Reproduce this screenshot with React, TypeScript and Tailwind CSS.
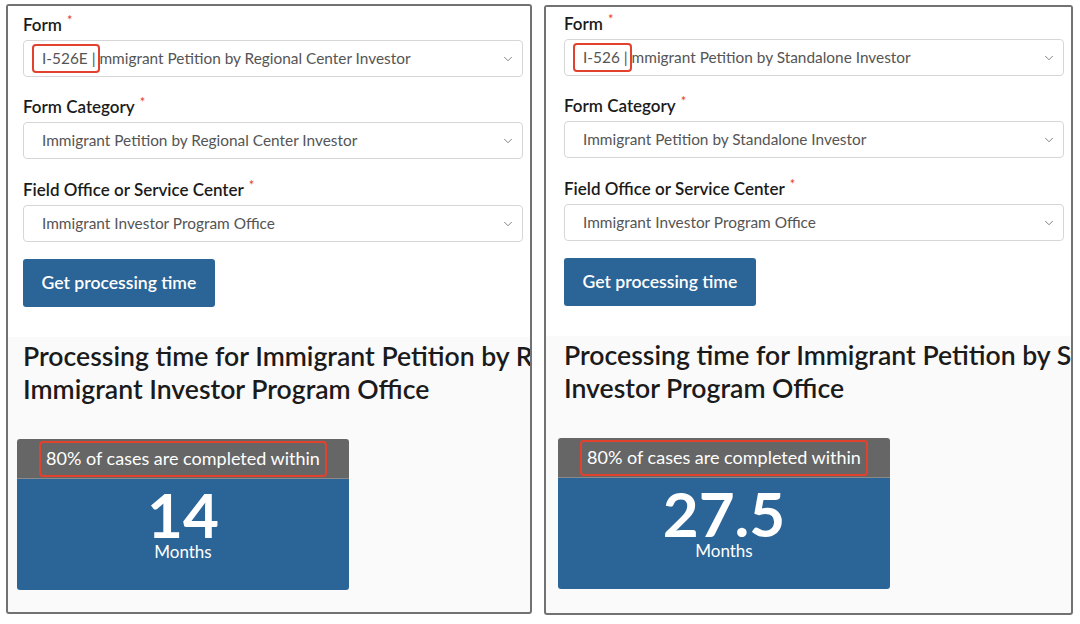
import { ChevronDown } from 'lucide-react';

type Panel = {
  code: string;
  name: string;
  office: string;
  line1: string;
  line2: string;
  months: string;
};

const PANELS: Panel[] = [
  {
    code: 'I-526E |',
    name: 'Immigrant Petition by Regional Center Investor',
    office: 'Immigrant Investor Program Office',
    line1: 'Processing time for Immigrant Petition by Regional Center Investor at',
    line2: 'Immigrant Investor Program Office',
    months: '14',
  },
  {
    code: 'I-526 |',
    name: 'Immigrant Petition by Standalone Investor',
    office: 'Immigrant Investor Program Office',
    line1: 'Processing time for Immigrant Petition by Standalone Investor at Immigrant',
    line2: 'Investor Program Office',
    months: '27.5',
  },
];

function Label({ text }: { text: string }) {
  return (
    <div className="flex h-[22px] items-center text-[17px] font-semibold text-[#1b1b1b]">
      {text}
      <span className="ml-[5px] -mt-[8px] text-[13px] font-normal text-[#e2412d]">*</span>
    </div>
  );
}

function Select({ children }: { children: React.ReactNode }) {
  return (
    <div className="mt-[4px] flex h-[37px] items-center justify-between rounded-[4px] border border-[#d6d6d6] bg-white pl-[18px] pr-[7px] text-[15.4px] text-[#555]">
      <div className="whitespace-nowrap">{children}</div>
      <ChevronDown size={14} strokeWidth={1.25} className="text-[#555]" />
    </div>
  );
}

function ProcessingPanel({
  p,
  className,
  pad,
}: {
  p: Panel;
  className: string;
  pad: string;
}) {
  return (
    <div
      className={`flex h-[610px] flex-col overflow-hidden rounded-[3px] border-2 border-[#727272] bg-[#fafafa] ${className}`}
    >
      {/* Form fields */}
      <section className={`bg-white pb-[30px] pr-[7px] ${pad}`}>
        <Label text="Form" />
        <Select>
          <span className="relative">
            {p.code}
            <span className="absolute -bottom-[6px] -left-[10px] -right-[4px] -top-[5px] rounded-[4px] border-2 border-[#e2412d]" />
          </span>{' '}
          {p.name.slice(1)}
        </Select>

        <div className="mt-[19px]">
          <Label text="Form Category" />
          <Select>{p.name}</Select>
        </div>

        <div className="mt-[20px]">
          <Label text="Field Office or Service Center" />
          <Select>{p.office}</Select>
        </div>

        <button className="mt-[17px] h-[48px] rounded-[3px] bg-[#2b6496] px-[18.5px] text-[17.6px] font-semibold text-white">
          Get processing time
        </button>
      </section>

      {/* Result */}
      <section className="pt-[3px]">
        <h2 className="whitespace-nowrap text-[26.6px] font-semibold leading-[33px] text-[#1b1b1b]">
          <span className="block pl-[var(--pl)]">{p.line1}</span>
          <span className="block pl-[var(--pl)]">{p.line2}</span>
        </h2>

        <div className="ml-[var(--cl)] mt-[33px] w-[332px] overflow-hidden rounded-[3px]">
          <div className="flex h-[40px] items-center justify-center border-b border-[#8a8a8a] bg-[#666]">
            <span className="relative text-[18px] text-white">
              80% of cases are completed within
              <span className="absolute -bottom-[5px] -left-[7px] -right-[7px] -top-[4px] rounded-[4px] border-2 border-[#e2412d]" />
            </span>
          </div>
          <div className="flex h-[111px] flex-col items-center bg-[#2b6496] text-white">
            <div className="mt-[8px] text-[62px] font-bold leading-[55px]">{p.months}</div>
            <div className="text-[17px] leading-[20px]">Months</div>
          </div>
        </div>
      </section>
    </div>
  );
}

export default function App() {
  return (
    <div className="flex h-[624px] w-[1080px] bg-white font-['Lato',sans-serif]">
      <ProcessingPanel
        p={PANELS[0]}
        pad="pl-[15px] pt-[8px]"
        className="ml-[6px] mt-[4px] w-[526px] [--cl:9px] [--pl:15px]"
      />
      <ProcessingPanel
        p={PANELS[1]}
        pad="pl-[18px] pt-[6px]"
        className="ml-[12px] mt-[5px] w-[529px] [--cl:12px] [--pl:18px]"
      />
    </div>
  );
}
